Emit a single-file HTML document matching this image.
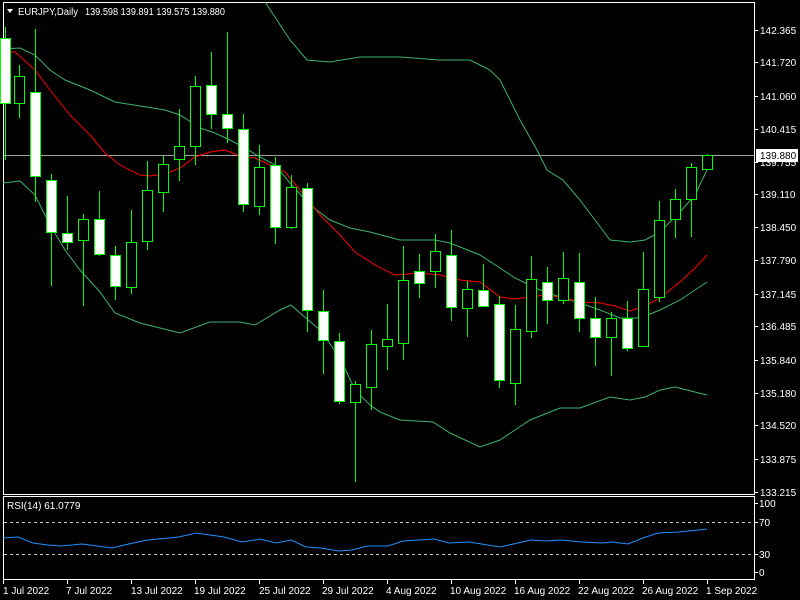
<!DOCTYPE html>
<html><head><meta charset="utf-8"><style>
html,body{margin:0;padding:0;background:#000;width:800px;height:600px;overflow:hidden}
svg{display:block}
text{font-family:"Liberation Sans",sans-serif;font-size:10px;fill:#fff}
</style></head><body>
<svg width="800" height="600" viewBox="0 0 800 600" xmlns="http://www.w3.org/2000/svg">
<rect width="800" height="600" fill="#000"/>
<g stroke="#fff" stroke-width="1" fill="none" shape-rendering="crispEdges">
<rect x="3.5" y="2.5" width="751" height="492"/>
<rect x="3.5" y="496.5" width="751" height="83"/>
</g>
<line x1="4" y1="155.5" x2="754" y2="155.5" stroke="#a0a0a0" shape-rendering="crispEdges"/>
<g stroke="#c8c8c8" stroke-dasharray="3,3" shape-rendering="crispEdges">
<line x1="4" y1="522.5" x2="754" y2="522.5"/>
<line x1="4" y1="554.5" x2="754" y2="554.5"/>
</g>
<g fill="none" stroke="#3cb371" stroke-width="1">
<polyline points="265,2 290,40 307,60 330,62 360,57 400,57 440,60 470,60 490,70 500,80 510,100 520,120 537,150 547,170 563,180 580,200 595,220 610,240 630,242 645,240 660,232 680,212 695,195 707,170"/>
<polyline points="3,49 20,48 35,55 50,70 65,80 90,90 115,102 140,106 165,110 180,115 200,128 215,133 230,140 245,148 260,157 275,165 290,183 310,205 330,220 350,228 370,232 400,240 435,240 450,243 480,255 500,268 515,278 540,290 560,297 580,303 600,310 620,318 640,318 660,310 680,300 707,282"/>
<polyline points="3,183 20,181 35,195 50,225 65,250 80,270 100,292 115,313 140,323 180,333 210,322 240,322 255,325 280,310 291,305 300,313 320,330 340,358 355,390 370,405 380,412 400,420 433,422 450,433 480,447 500,440 530,420 560,408 580,408 610,397 630,400 645,397 660,390 675,387 695,392 707,395"/>
</g>
<polyline fill="none" stroke="#ff0000" stroke-width="1" points="3,52 15,52 35,70 50,90 70,115 90,135 105,153 120,165 140,175 150,176 165,174 180,168 195,157 210,152 225,150 240,156 255,158 270,165 285,172 300,190 320,215 340,235 355,252 375,265 395,275 420,273 440,275 460,280 480,282 500,297 515,299 530,297 545,295 560,297 580,302 600,303 615,306 630,311 645,306 660,298 680,282 695,268 707,255"/>
<g stroke="#00ff00" stroke-width="1" shape-rendering="crispEdges">
<g>
<line x1="5.5" y1="27" x2="5.5" y2="160"/>
<line x1="19.5" y1="65" x2="19.5" y2="118"/>
<line x1="35.5" y1="29" x2="35.5" y2="202"/>
<line x1="51.5" y1="174" x2="51.5" y2="286"/>
<line x1="67.5" y1="196" x2="67.5" y2="250"/>
<line x1="83.5" y1="214" x2="83.5" y2="306"/>
<line x1="99.5" y1="191" x2="99.5" y2="256"/>
<line x1="115.5" y1="246" x2="115.5" y2="300"/>
<line x1="131.5" y1="210" x2="131.5" y2="294"/>
<line x1="147.5" y1="161" x2="147.5" y2="250"/>
<line x1="163.5" y1="156" x2="163.5" y2="212"/>
<line x1="179.5" y1="109" x2="179.5" y2="181"/>
<line x1="195.5" y1="76" x2="195.5" y2="165"/>
<line x1="211.5" y1="52" x2="211.5" y2="129"/>
<line x1="227.5" y1="32" x2="227.5" y2="143"/>
<line x1="243.5" y1="114" x2="243.5" y2="212"/>
<line x1="259.5" y1="145" x2="259.5" y2="215"/>
<line x1="275.5" y1="157" x2="275.5" y2="244"/>
<line x1="291.5" y1="175" x2="291.5" y2="229"/>
<line x1="307.5" y1="183" x2="307.5" y2="332"/>
<line x1="323.5" y1="290" x2="323.5" y2="374"/>
<line x1="339.5" y1="333" x2="339.5" y2="404"/>
<line x1="355.5" y1="381" x2="355.5" y2="482"/>
<line x1="371.5" y1="330" x2="371.5" y2="410"/>
<line x1="387.5" y1="304" x2="387.5" y2="370"/>
<line x1="403.5" y1="246" x2="403.5" y2="360"/>
<line x1="419.5" y1="254" x2="419.5" y2="298"/>
<line x1="435.5" y1="234" x2="435.5" y2="288"/>
<line x1="451.5" y1="230" x2="451.5" y2="321"/>
<line x1="467.5" y1="281" x2="467.5" y2="337"/>
<line x1="483.5" y1="264" x2="483.5" y2="306"/>
<line x1="499.5" y1="296" x2="499.5" y2="388"/>
<line x1="515.5" y1="305" x2="515.5" y2="405"/>
<line x1="531.5" y1="256" x2="531.5" y2="338"/>
<line x1="547.5" y1="267" x2="547.5" y2="324"/>
<line x1="563.5" y1="252" x2="563.5" y2="304"/>
<line x1="579.5" y1="253" x2="579.5" y2="332"/>
<line x1="595.5" y1="297" x2="595.5" y2="366"/>
<line x1="611.5" y1="312" x2="611.5" y2="376"/>
<line x1="627.5" y1="301" x2="627.5" y2="351"/>
<line x1="643.5" y1="252" x2="643.5" y2="346"/>
<line x1="659.5" y1="201" x2="659.5" y2="302"/>
<line x1="675.5" y1="189" x2="675.5" y2="238"/>
<line x1="691.5" y1="163" x2="691.5" y2="237"/>
<line x1="707.5" y1="154" x2="707.5" y2="169"/>
</g>
<g fill="#fff">
<rect x="0.5" y="38.5" width="10" height="65"/>
<rect x="30.5" y="92.5" width="10" height="84"/>
<rect x="46.5" y="180.5" width="10" height="52"/>
<rect x="62.5" y="233.5" width="10" height="9"/>
<rect x="94.5" y="219.5" width="10" height="35"/>
<rect x="110.5" y="255.5" width="10" height="31"/>
<rect x="206.5" y="85.5" width="10" height="29"/>
<rect x="222.5" y="114.5" width="10" height="14"/>
<rect x="238.5" y="129.5" width="10" height="75"/>
<rect x="270.5" y="165.5" width="10" height="62"/>
<rect x="302.5" y="188.5" width="10" height="122"/>
<rect x="318.5" y="311.5" width="10" height="29"/>
<rect x="334.5" y="341.5" width="10" height="60"/>
<rect x="414.5" y="271.5" width="10" height="12"/>
<rect x="446.5" y="255.5" width="10" height="52"/>
<rect x="478.5" y="290.5" width="10" height="16"/>
<rect x="494.5" y="304.5" width="10" height="76"/>
<rect x="542.5" y="282.5" width="10" height="18"/>
<rect x="574.5" y="282.5" width="10" height="36"/>
<rect x="590.5" y="318.5" width="10" height="19"/>
<rect x="622.5" y="318.5" width="10" height="30"/>
</g>
<g fill="#000">
<rect x="14.5" y="76.5" width="10" height="27"/>
<rect x="78.5" y="219.5" width="10" height="21"/>
<rect x="126.5" y="242.5" width="10" height="45"/>
<rect x="142.5" y="190.5" width="10" height="51"/>
<rect x="158.5" y="164.5" width="10" height="28"/>
<rect x="174.5" y="146.5" width="10" height="13"/>
<rect x="190.5" y="86.5" width="10" height="60"/>
<rect x="254.5" y="167.5" width="10" height="39"/>
<rect x="286.5" y="187.5" width="10" height="40"/>
<rect x="350.5" y="384.5" width="10" height="18"/>
<rect x="366.5" y="344.5" width="10" height="43"/>
<rect x="382.5" y="339.5" width="10" height="7"/>
<rect x="398.5" y="280.5" width="10" height="63"/>
<rect x="430.5" y="251.5" width="10" height="20"/>
<rect x="462.5" y="289.5" width="10" height="19"/>
<rect x="510.5" y="329.5" width="10" height="54"/>
<rect x="526.5" y="279.5" width="10" height="52"/>
<rect x="558.5" y="278.5" width="10" height="22"/>
<rect x="606.5" y="318.5" width="10" height="19"/>
<rect x="638.5" y="289.5" width="10" height="57"/>
<rect x="654.5" y="220.5" width="10" height="77"/>
<rect x="670.5" y="199.5" width="10" height="20"/>
<rect x="686.5" y="167.5" width="10" height="32"/>
<rect x="702.5" y="155.5" width="10" height="14"/>
</g>
</g>
<polyline fill="none" stroke="#1e90ff" stroke-width="1" points="3,538 18,537 33,543 48,545 61,546 82,544 112,548 133,543 148,540 179,537 196,533 224,537 242,542 260,539 276,543 291,540 306,547 321,548 339,551 352,550 367,546 388,546 403,541 434,539 449,543 469,542 500,547 531,540 546,541 561,540 582,542 602,543 612,542 628,544 643,538 658,533 679,532 689,531 707,529"/>
<polygon points="7,9 13,9 10,13" fill="#fff"/>
<text x="18" y="15" font-size="10.5" textLength="60" lengthAdjust="spacingAndGlyphs">EURJPY,Daily</text>
<text x="85" y="15" font-size="10.5" textLength="140" lengthAdjust="spacingAndGlyphs">139.598 139.891 139.575 139.880</text>
<text x="7" y="509">RSI(14) 61.0779</text>
<g stroke="#fff" shape-rendering="crispEdges">
<line x1="754" y1="30.5" x2="758" y2="30.5"/><line x1="754" y1="62.5" x2="758" y2="62.5"/>
<line x1="754" y1="96.5" x2="758" y2="96.5"/><line x1="754" y1="129.5" x2="758" y2="129.5"/>
<line x1="754" y1="162.5" x2="758" y2="162.5"/><line x1="754" y1="194.5" x2="758" y2="194.5"/>
<line x1="754" y1="227.5" x2="758" y2="227.5"/><line x1="754" y1="260.5" x2="758" y2="260.5"/>
<line x1="754" y1="294.5" x2="758" y2="294.5"/><line x1="754" y1="326.5" x2="758" y2="326.5"/>
<line x1="754" y1="360.5" x2="758" y2="360.5"/><line x1="754" y1="393.5" x2="758" y2="393.5"/>
<line x1="754" y1="425.5" x2="758" y2="425.5"/><line x1="754" y1="459.5" x2="758" y2="459.5"/>
<line x1="754" y1="492.5" x2="758" y2="492.5"/>
<line x1="754" y1="503.5" x2="758" y2="503.5"/><line x1="754" y1="522.5" x2="758" y2="522.5"/>
<line x1="754" y1="554.5" x2="758" y2="554.5"/><line x1="754" y1="572.5" x2="758" y2="572.5"/>
</g>
<g>
<text x="760" y="34">142.365</text><text x="760" y="66">141.720</text>
<text x="760" y="100">141.060</text><text x="760" y="133">140.415</text>
<text x="760" y="166">139.755</text><text x="760" y="198">139.110</text>
<text x="760" y="231">138.450</text><text x="760" y="264">137.790</text>
<text x="760" y="298">137.145</text><text x="760" y="330">136.485</text>
<text x="760" y="364">135.840</text><text x="760" y="397">135.180</text>
<text x="760" y="429">134.520</text><text x="760" y="463">133.875</text>
<text x="760" y="496">133.215</text>
<text x="759" y="507">100</text><text x="759" y="526">70</text>
<text x="759" y="558">30</text><text x="759" y="576">0</text>
</g>
<rect x="756" y="149" width="42" height="13" fill="#fff"/>
<text x="760" y="159" style="fill:#000">139.880</text>
<g stroke="#fff" shape-rendering="crispEdges">
<line x1="3.5" y1="580" x2="3.5" y2="584"/><line x1="67.5" y1="580" x2="67.5" y2="584"/>
<line x1="131.5" y1="580" x2="131.5" y2="584"/><line x1="195.5" y1="580" x2="195.5" y2="584"/>
<line x1="259.5" y1="580" x2="259.5" y2="584"/><line x1="323.5" y1="580" x2="323.5" y2="584"/>
<line x1="387.5" y1="580" x2="387.5" y2="584"/><line x1="451.5" y1="580" x2="451.5" y2="584"/>
<line x1="515.5" y1="580" x2="515.5" y2="584"/><line x1="579.5" y1="580" x2="579.5" y2="584"/>
<line x1="643.5" y1="580" x2="643.5" y2="584"/><line x1="707.5" y1="580" x2="707.5" y2="584"/>
</g>
<g>
<text x="3" y="594">1 Jul 2022</text><text x="66" y="594">7 Jul 2022</text>
<text x="131" y="594">13 Jul 2022</text><text x="194" y="594">19 Jul 2022</text>
<text x="259" y="594">25 Jul 2022</text><text x="322" y="594">29 Jul 2022</text>
<text x="386" y="594">4 Aug 2022</text><text x="450" y="594">10 Aug 2022</text>
<text x="514" y="594">16 Aug 2022</text><text x="578" y="594">22 Aug 2022</text>
<text x="642" y="594">26 Aug 2022</text><text x="706" y="594">1 Sep 2022</text>
</g>
</svg>
</body></html>
